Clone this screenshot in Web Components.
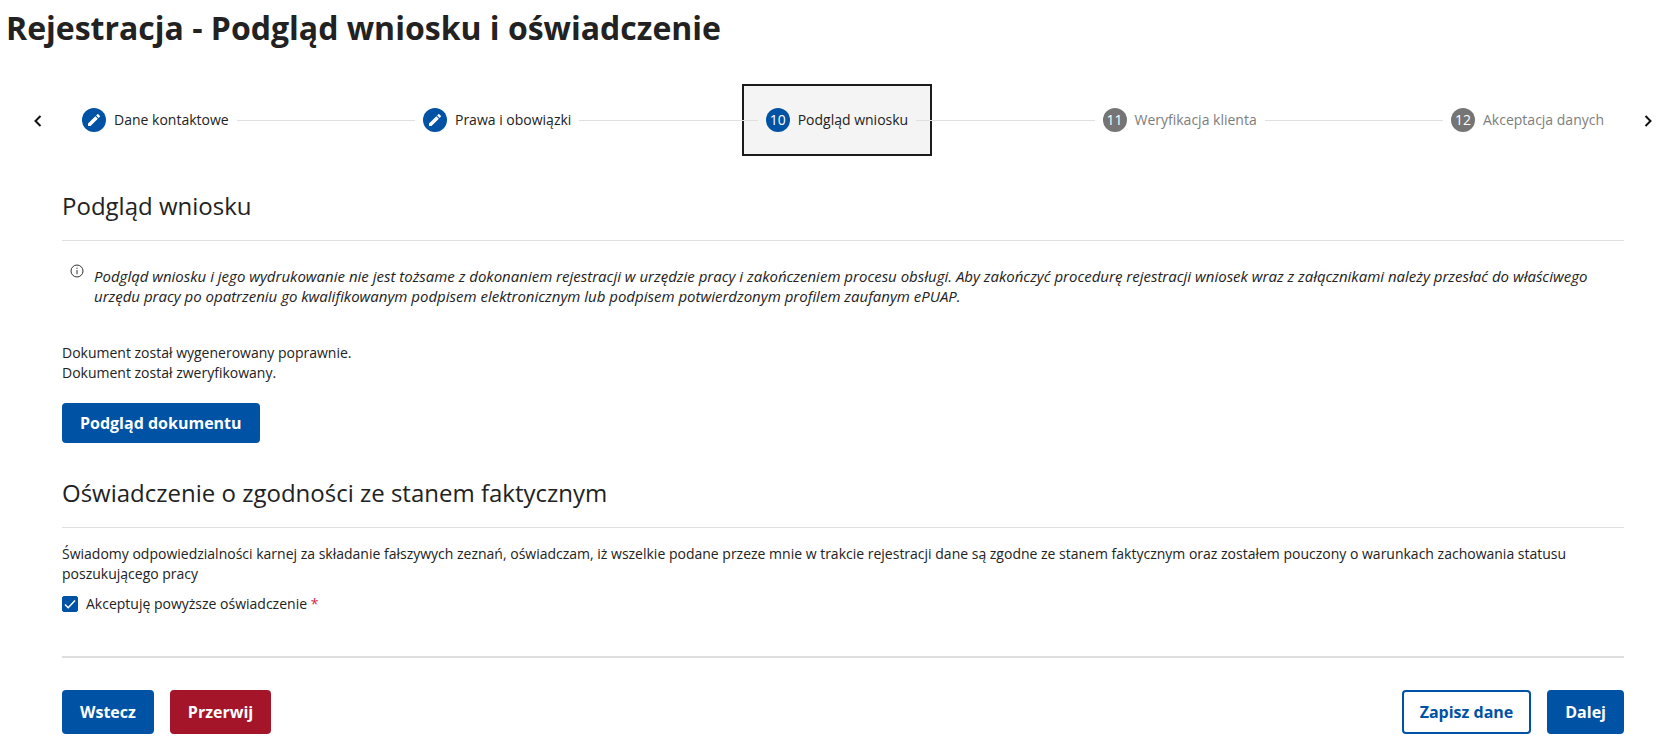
<!DOCTYPE html>
<html lang="pl">
<head>
<meta charset="utf-8">
<meta name="viewport" content="width=device-width, initial-scale=1">
<title>Rejestracja - Podgląd wniosku i oświadczenie</title>
<style>
    body {
        margin: 0;
        background: #fff;
        color: #222;
        font: 14px/20px "Open Sans", sans-serif;
        --primary: #0052a5;
        --danger: #a4152a;
        --line: #dfdfdf;
    }

    h1 {
        margin: 0;
        padding: 8px 6px 36px;
        font-size: 32px;
        line-height: 40px;
    }

    main {
        padding: 0 49px 20px 62px;
    }

    p {
        margin: 0;
    }

    .status {
        margin: 37px 0 20px;
    }
</style>
</head>
<body>

<h1>Rejestracja - Podgląd wniosku i oświadczenie</h1>

<form-stepper>
    <form-step state="done">Dane kontaktowe</form-step>
    <step-line></step-line>
    <form-step state="done">Prawa i obowiązki</form-step>
    <step-line></step-line>
    <form-step state="active" number="10">Podgląd wniosku</form-step>
    <step-line></step-line>
    <form-step number="11">Weryfikacja klienta</form-step>
    <step-line></step-line>
    <form-step number="12">Akceptacja danych</form-step>
</form-stepper>

<main>
    <form-section heading="Podgląd wniosku">
        <info-note>Podgląd wniosku i jego wydrukowanie nie jest tożsame z dokonaniem rejestracji w urzędzie pracy i zakończeniem procesu obsługi. Aby zakończyć procedurę rejestracji wniosek wraz z załącznikami należy przesłać do właściwego urzędu pracy po opatrzeniu go kwalifikowanym podpisem elektronicznym lub podpisem potwierdzonym profilem zaufanym ePUAP.</info-note>
        <p class="status">Dokument został wygenerowany poprawnie.<br>Dokument został zweryfikowany.</p>
        <app-button size="small">Podgląd dokumentu</app-button>
    </form-section>

    <form-section heading="Oświadczenie o zgodności ze stanem faktycznym">
        <p>Świadomy odpowiedzialności karnej za składanie fałszywych zeznań, oświadczam, iż wszelkie podane przeze mnie w trakcie rejestracji dane są zgodne ze stanem faktycznym oraz zostałem pouczony o warunkach zachowania statusu poszukującego pracy</p>
        <app-checkbox checked required>Akceptuję powyższe oświadczenie</app-checkbox>
    </form-section>

    <form-actions>
        <app-button>Wstecz</app-button>
        <app-button kind="danger">Przerwij</app-button>
        <app-button slot="end" kind="outline">Zapisz dane</app-button>
        <app-button slot="end">Dalej</app-button>
    </form-actions>
</main>

<script>
(function () {
    "use strict";

    // registers an element whose shadow root is filled from a html string
    function define(name, render) {
        customElements.define(name, class extends HTMLElement {
            connectedCallback() {
                if (this.shadowRoot) return
                this.attachShadow({ mode: 'open' }).innerHTML = render(this);
            }
        });
    }

    var pencil = '<svg width="16" height="16" viewBox="0 0 24 24" fill="currentColor" aria-hidden="true"><path d="M3 17.25V21h3.75L17.81 9.94l-3.75-3.75L3 17.25zM20.71 7.04a.996.996 0 0 0 0-1.41l-2.34-2.34a.996.996 0 0 0-1.41 0l-1.83 1.83 3.75 3.75 1.83-1.83z"/></svg>';

    define('form-stepper', function () {
        return `
            <style>
                :host {
                    display: flex;
                    align-items: center;
                    padding: 0 5px 0 18px;
                }
                nav {
                    flex: 1;
                    display: flex;
                    align-items: center;
                }
                button {
                    display: grid;
                    place-items: center;
                    width: 40px;
                    height: 40px;
                    padding: 0;
                    border: 0;
                    background: none;
                    color: #111;
                    cursor: pointer;
                }
                svg {
                    fill: none;
                    stroke: currentColor;
                    stroke-width: 2;
                }
            </style>
            <button type="button" aria-label="Poprzednie kroki">
                <svg width="12" height="14" viewBox="0 0 12 14"><path d="M8.500 3 3.500 8l5 5"/></svg>
            </button>
            <nav aria-label="Kroki"><slot></slot></nav>
            <button type="button" aria-label="Następne kroki">
                <svg width="12" height="14" viewBox="0 0 12 14"><path d="m3.500 3 5 5-5 5"/></svg>
            </button>
        `
    });

    define('form-step', function (el) {
        return `
            <style>
                :host {
                    display: block;
                    white-space: nowrap;
                }
                button {
                    display: flex;
                    align-items: center;
                    gap: 8px;
                    height: 72px;
                    padding: 0 24px;
                    border: 0;
                    background: none;
                    color: #7d7d7d;
                    font: inherit;
                    cursor: pointer;
                }
                .icon {
                    display: grid;
                    place-items: center;
                    width: 24px;
                    height: 24px;
                    border-radius: 50%;
                    background: #757575;
                    color: #fff;
                }
                :host([state]) button {
                    color: #222;
                }
                :host([state]) .icon {
                    background: var(--primary);
                }
                :host([state="active"]) button {
                    padding: 0 22px;
                    border: 2px solid #1b1b1b;
                    background: #f4f4f4;
                }
            </style>
            <button type="button">
                <span class="icon">${el.getAttribute('number') || pencil}</span>
                <slot></slot>
            </button>
        `
    });

    // runs over the padding of both neighbouring steps
    define('step-line', function () {
        return `
            <style>
                :host {
                    flex: 1;
                    min-width: 32px;
                    margin: 0 -16px;
                    border-top: 1px solid var(--line);
                    z-index: 1;
                }
            </style>
        `
    });

    define('form-section', function (el) {
        return `
            <style>
                :host {
                    display: block;
                    padding-top: 34px;
                }
                h2 {
                    margin: 0 0 16px;
                    padding-bottom: 18px;
                    border-bottom: 1px solid var(--line);
                    font-size: 24px;
                    font-weight: 400;
                    line-height: 32px;
                }
            </style>
            <h2>${el.getAttribute('heading')}</h2>
            <slot></slot>
        `
    });

    define('info-note', function () {
        return `
            <style>
                :host {
                    display: flex;
                    gap: 10px;
                    padding: 7px 32px 0 8px;
                    font-size: 15px;
                    font-style: italic;
                }
                svg {
                    flex: none;
                }
                div {
                    padding-top: 2px;
                }
            </style>
            <svg width="14" height="14" viewBox="0 0 14 14" fill="none" stroke="#333" aria-hidden="true"><circle cx="7" cy="7" r="6"/><path d="M7 6v4.200M7 3.600v1.300"/></svg>
            <div><slot></slot></div>
        `
    });

    define('app-button', function () {
        return `
            <style>
                :host {
                    display: inline-block;
                    vertical-align: top;
                }
                button {
                    height: 44px;
                    padding: 0 16px;
                    border: 2px solid var(--primary);
                    border-radius: 4px;
                    background: var(--primary);
                    color: #fff;
                    font: bold 16px/24px "Open Sans", sans-serif;
                    white-space: nowrap;
                    cursor: pointer;
                }
                :host([size="small"]) button {
                    height: 40px;
                }
                :host([kind="danger"]) button {
                    border-color: var(--danger);
                    background: var(--danger);
                }
                :host([kind="outline"]) button {
                    background: #fff;
                    color: var(--primary);
                }
            </style>
            <button type="button"><slot></slot></button>
        `
    });

    define('app-checkbox', function (el) {
        return `
            <style>
                :host {
                    display: flex;
                    margin-top: 10px;
                }
                label {
                    display: flex;
                    align-items: center;
                    gap: 8px;
                    cursor: pointer;
                }
                .box {
                    display: grid;
                }
                input, svg {
                    grid-area: 1 / 1;
                    width: 16px;
                    height: 16px;
                    margin: 0;
                }
                input {
                    appearance: none;
                    border: 1px solid var(--primary);
                    border-radius: 2px;
                    background: #fff;
                }
                input:checked {
                    background: var(--primary);
                }
                svg {
                    fill: none;
                    stroke: #fff;
                    stroke-width: 1.5;
                    pointer-events: none;
                }
                .star {
                    color: #d7264a;
                }
            </style>
            <label>
                <span class="box">
                    <input type="checkbox" ${el.hasAttribute('checked') ? 'checked' : ''} ${el.hasAttribute('required') ? 'required' : ''}>
                    <svg viewBox="0 0 16 16" aria-hidden="true"><path d="m3 8.500 3.200 3.200L13 4.500"/></svg>
                </span>
                <span><slot></slot> ${el.hasAttribute('required') ? '<span class="star">*</span>' : ''}</span>
            </label>
        `
    });

    define('form-actions', function () {
        return `
            <style>
                :host {
                    display: flex;
                    justify-content: space-between;
                    margin-top: 42px;
                    padding-top: 32px;
                    border-top: 2px solid var(--line);
                }
                div {
                    display: flex;
                    gap: 16px;
                }
            </style>
            <div><slot></slot></div>
            <div><slot name="end"></slot></div>
        `
    });

}())
</script>
</body>
</html>
